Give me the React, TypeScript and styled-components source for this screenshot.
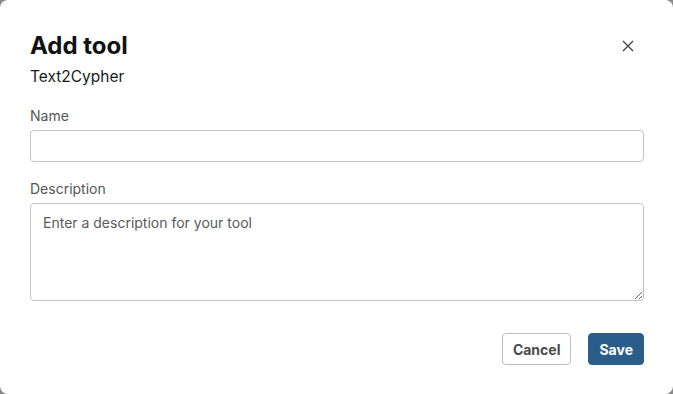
import styled, { createGlobalStyle } from 'styled-components';

const GlobalStyle = createGlobalStyle`
  html, body {
    margin: 0;
    padding: 0;
    background: #8a8a8a;
  }
  body {
    font-family: Inter, "Noto Sans", "Liberation Sans", sans-serif;
  }
`;

const Dialog = styled.div`
  box-sizing: border-box;
  width: 673px;
  height: 394px;
  background: #fff;
  border-radius: 8px;
  padding: 31px 29px 0 30px;
  display: flex;
  flex-direction: column;
`;

const Header = styled.div`
  display: flex;
  align-items: flex-start;
  justify-content: space-between;
`;

const Title = styled.h2`
  margin: 0;
  font-size: 24px;
  line-height: 30px;
  font-weight: 700;
  color: #111;
`;

const Subtitle = styled.div`
  margin-top: 6px;
  font-size: 15.5px;
  line-height: 20px;
  color: #1a1a1a;
`;

const CloseButton = styled.button`
  border: none;
  background: none;
  padding: 0;
  margin: 7px 8px 0 0;
  width: 16px;
  height: 16px;
  display: flex;
  align-items: center;
  justify-content: center;
  color: #444;
  cursor: pointer;
`;

const Field = styled.div<{ $top: number }>`
  display: flex;
  flex-direction: column;
  margin-top: ${(p) => p.$top}px;
`;

const Label = styled.label`
  font-size: 14px;
  line-height: 18px;
  color: #555;
  margin-bottom: 5px;
`;

const Input = styled.input`
  box-sizing: border-box;
  height: 32px;
  border: 1px solid #c4c4c4;
  border-radius: 4px;
  padding: 0 12px;
  font: inherit;
  font-size: 14px;
`;

const TextArea = styled.textarea`
  box-sizing: border-box;
  height: 98px;
  border: 1px solid #c4c4c4;
  border-radius: 4px;
  padding: 10px 12px;
  font: inherit;
  font-size: 14px;
  color: #222;
  resize: vertical;
  &::placeholder {
    color: #5a5a5a;
  }
`;

const Footer = styled.div`
  display: flex;
  justify-content: flex-end;
  gap: 17px;
  margin-top: 32px;
`;

const Button = styled.button<{ $primary?: boolean }>`
  box-sizing: border-box;
  height: 32px;
  padding: 0 10px;
  border-radius: 4px;
  font: inherit;
  font-size: 14px;
  font-weight: 700;
  cursor: pointer;
  border: 1px solid ${(p) => (p.$primary ? '#2a5d8a' : '#bdbdbd')};
  background: ${(p) => (p.$primary ? '#2a5d8a' : '#fff')};
  color: ${(p) => (p.$primary ? '#fff' : '#4a4a4a')};
`;

export default function App() {
  return (
    <>
      <GlobalStyle />
      <Dialog>
        <Header>
          <div>
            <Title>Add tool</Title>
            <Subtitle>Text2Cypher</Subtitle>
          </div>
          <CloseButton aria-label="Close">
            <svg width="12" height="12" viewBox="0 0 12 12" fill="none" stroke="currentColor" strokeWidth="1.4">
              <path d="M1 1l10 10M11 1L1 11" />
            </svg>
          </CloseButton>
        </Header>

        <Field $top={20}>
          <Label>Name</Label>
          <Input />
        </Field>

        <Field $top={18}>
          <Label>Description</Label>
          <TextArea placeholder="Enter a description for your tool" />
        </Field>

        <Footer>
          <Button>Cancel</Button>
          <Button $primary>Save</Button>
        </Footer>
      </Dialog>
    </>
  );
}
